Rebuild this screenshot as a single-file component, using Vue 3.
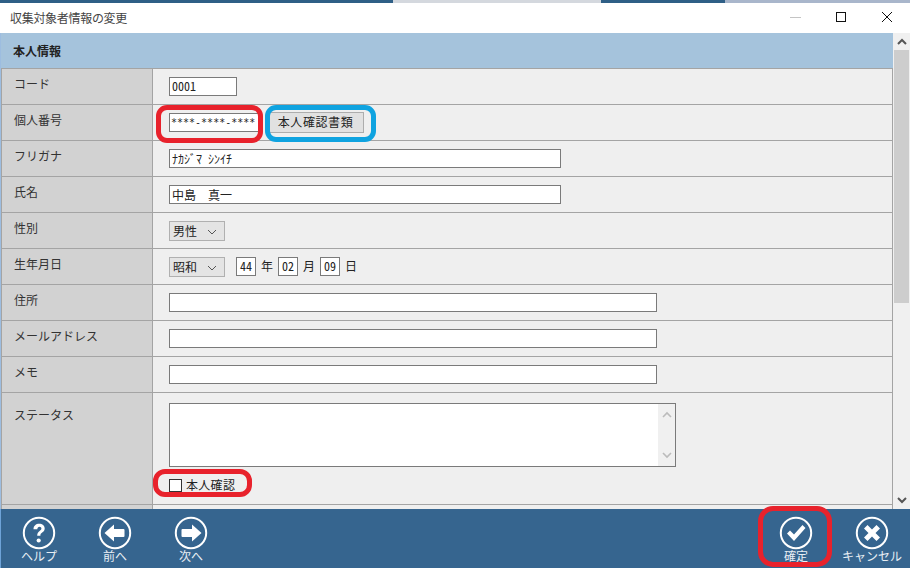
<script setup>
const textRows = [
  { label: '住所', w: 488 },
  { label: 'メールアドレス', w: 488 },
  { label: 'メモ', w: 488 },
]
</script>

<template>
  <div class="win">
    <div class="topstrip"><span class="s1"></span><span class="s2"></span><span class="s3"></span></div>
    <div class="titlebar">
      <span class="title">収集対象者情報の変更</span>
      <div class="ctrls">
        <svg width="46" height="30" viewBox="0 0 46 30"><path d="M18 14.500h11" stroke="#c4c4c4" stroke-width="1" /></svg>
        <svg width="46" height="30" viewBox="0 0 46 30"><rect x="18.500" y="9.500" width="9" height="9" fill="none" stroke="#111" /></svg>
        <svg width="46" height="30" viewBox="0 0 46 30"><path d="M18 9l10 10M28 9l-10 10" stroke="#111" fill="none" /></svg>
      </div>
    </div>
    <div class="body">
      <div class="main">
        <div class="sect">本人情報</div>
        <div class="table">
          <div class="row">
            <div class="lab">コード</div>
            <div class="val"><span class="tb w68 num">0001</span></div>
          </div>
          <div class="row">
            <div class="lab">個人番号</div>
            <div class="val gap">
              <span class="tb w91 stars">****-****-****</span>
              <button class="btn">本人確認書類</button>
              <span class="mark red m1"></span>
              <span class="mark blue m2"></span>
            </div>
          </div>
          <div class="row">
            <div class="lab">フリガナ</div>
            <div class="val"><span class="tb w392">ﾅｶｼﾞﾏ ｼﾝｲﾁ</span></div>
          </div>
          <div class="row">
            <div class="lab">氏名</div>
            <div class="val"><span class="tb w392 full">中島　真一</span></div>
          </div>
          <div class="row">
            <div class="lab">性別</div>
            <div class="val"><span class="sel">男性<svg class="chev" width="10" height="6" viewBox="0 0 10 6"><path d="M1 1l4 4 4-4" fill="none" stroke="#555" /></svg></span></div>
          </div>
          <div class="row">
            <div class="lab">生年月日</div>
            <div class="val">
              <span class="sel">昭和<svg class="chev" width="10" height="6" viewBox="0 0 10 6"><path d="M1 1l4 4 4-4" fill="none" stroke="#555" /></svg></span>
              <span class="tb w20 num first">44</span><span class="u">年</span>
              <span class="tb w20 num">02</span><span class="u">月</span>
              <span class="tb w20 num">09</span><span class="u">日</span>
            </div>
          </div>
          <div v-for="r in textRows" :key="r.label" class="row">
            <div class="lab">{{ r.label }}</div>
            <div class="val"><span class="tb" :style="{ width: r.w + 'px' }"></span></div>
          </div>
          <div class="row tall">
            <div class="lab">ステータス</div>
            <div class="val col">
              <div class="area">
                <div class="areabar">
                  <svg width="10" height="7" viewBox="0 0 10 7"><path d="M1 6l4-4 4 4" fill="none" stroke="#bbb" stroke-width="1.600" /></svg>
                  <svg width="10" height="7" viewBox="0 0 10 7"><path d="M1 1l4 4 4-4" fill="none" stroke="#bbb" stroke-width="1.600" /></svg>
                </div>
              </div>
              <div class="check"><span class="box"></span>本人確認</div>
              <span class="mark red m3"></span>
            </div>
          </div>
          <div class="row stub"><div class="lab"></div><div class="val"></div></div>
        </div>
      </div>
      <div class="sb">
        <div class="sbbtn"><svg width="10" height="7" viewBox="0 0 10 7"><path d="M1 6l4-4 4 4" fill="none" stroke="#555" stroke-width="2" /></svg></div>
        <div class="thumb"></div>
        <div class="sbrest"></div>
        <div class="sbbtn"><svg width="10" height="7" viewBox="0 0 10 7"><path d="M1 1l4 4 4-4" fill="none" stroke="#555" stroke-width="2" /></svg></div>
      </div>
    </div>
    <div class="foot">
      <div class="fbtn">
        <svg width="34" height="34" viewBox="0 0 34 34"><circle cx="17" cy="17" r="15.200" fill="none" stroke="#fff" stroke-width="2" /><path d="M11.500 13.200c0-3.400 2.500-5.400 5.700-5.400 3.200 0 5.500 1.800 5.500 4.700 0 2-1.100 3.100-2.500 4.100-1.300.9-1.800 1.500-1.800 3.200h-3.200c0-2.500.7-3.600 2.400-4.800 1.200-.9 1.800-1.400 1.800-2.400 0-1.100-.8-1.800-1.900-1.800-1.300 0-2.100.9-2.200 2.400z" fill="#fff" /><circle cx="16.700" cy="24.500" r="2.100" fill="#fff" /></svg>
        <span>ヘルプ</span>
      </div>
      <div class="fbtn">
        <svg width="34" height="34" viewBox="0 0 34 34"><circle cx="17" cy="17" r="15.200" fill="none" stroke="#fff" stroke-width="2" /><path d="M6.500 17L16 8.500V13h9.500a1 1 0 0 1 1 1v6a1 1 0 0 1-1 1H16v4.500z" fill="#fff" /></svg>
        <span>前へ</span>
      </div>
      <div class="fbtn">
        <svg width="34" height="34" viewBox="0 0 34 34"><circle cx="17" cy="17" r="15.200" fill="none" stroke="#fff" stroke-width="2" /><path d="M27.500 17L18 8.500V13H8.500a1 1 0 0 0-1 1v6a1 1 0 0 0 1 1H18v4.500z" fill="#fff" /></svg>
        <span>次へ</span>
      </div>
      <div class="spacer"></div>
      <div class="fbtn">
        <svg width="34" height="34" viewBox="0 0 34 34"><circle cx="17" cy="17" r="15.200" fill="none" stroke="#fff" stroke-width="2" /><path d="M8 17.500l3-3 4 4 8.500-9.500 3 3L15 25z" fill="#fff" /></svg>
        <span>確定</span>
        <span class="mark red m4"></span>
      </div>
      <div class="fbtn">
        <svg width="34" height="34" viewBox="0 0 34 34"><circle cx="17" cy="17" r="15.200" fill="none" stroke="#fff" stroke-width="2" /><path d="M9 12.500L12.500 9l4.500 4.500L21.500 9l3.500 3.500-4.500 4.500 4.500 4.500-3.500 3.500-4.500-4.500-4.500 4.500L9 21.500l4.500-4.500z" fill="#fff" /></svg>
        <span>キャンセル</span>
      </div>
    </div>
  </div>
</template>

<style scoped>
.win {
  width: 910px;
  height: 568px;
  display: flex;
  flex-direction: column;
  overflow: hidden;
  font-family: "Noto Sans CJK JP", "Liberation Sans", sans-serif;
  font-size: 12px;
  color: #222;
  background: #fff;
}
.topstrip {
  height: 3px;
  flex: none;
  display: flex;
  background: #a9b6cb;
}
.s1 { width: 393px; background: #2f5f86; }
.s2 { width: 208px; background: #d4d8de; }
.s3 { width: 124px; background: #2f5f86; }
.titlebar {
  height: 30px;
  flex: none;
  display: flex;
  align-items: center;
  justify-content: space-between;
  background: #fff;
  padding-left: 10px;
}
.title {
  font-size: 12px;
  letter-spacing: -.3px;
  color: #444;
  margin-top: -2px;
}
.ctrls { display: flex; }
.ctrls svg { display: block; }
.body {
  height: 476px;
  flex: none;
  display: flex;
  border-left: 1px solid #9dbde0;
}
.main {
  width: 892px;
  flex: none;
  overflow: hidden;
  background: #efefef;
}
.sect {
  height: 35px;
  background: #a5c3dc;
  display: flex;
  align-items: center;
  padding-left: 12px;
  font-weight: 700;
  font-size: 12px;
  color: #222;
}
.table { border-left: 1px solid #a4a4a4; border-right: 1px solid #a4a4a4; }
.row {
  height: 36px;
  box-sizing: border-box;
  display: flex;
  border-top: 1px solid #a4a4a4;
}
.row.tall { height: 112px; }
.row.tall .lab { padding-top: 13px; }
.row.stub { height: 10px; }
.lab {
  width: 151px;
  flex: none;
  box-sizing: border-box;
  background: #d2d2d2;
  border-right: 1px solid #a4a4a4;
  padding: 6px 0 0 12px;
  line-height: 18px;
  font-size: 12px;
  color: #333;
}
.val {
  position: relative;
  flex: 1;
  display: flex;
  align-items: flex-start;
  padding: 8px 0 0 16px;
}
.tb {
  display: block;
  box-sizing: border-box;
  height: 19px;
  flex: none;
  background: #fff;
  border: 1px solid #7a7a7a;
  padding-left: 2px;
  font-family: "Noto Sans CJK JP", sans-serif;
  font-feature-settings: "hwid";
  font-size: 12px;
  line-height: 17px;
  color: #222;
  overflow: hidden;
  white-space: nowrap;
}
.num { line-height: 15px; }
.full { font-feature-settings: normal; }
.stars {
  font-family: "DejaVu Sans Mono", monospace;
  font-feature-settings: normal;
  font-size: 10px;
  line-height: 17px;
  padding-left: 1px;
}
.w68 { width: 68px; }
.w91 { width: 91px; }
.w392 { width: 392px; }
.w20 { width: 20px; padding: 0; text-align: center; }
.gap { gap: 6px; padding-top: 7px; }
.gap .tb { margin-top: 1px; }
.btn {
  width: 97px;
  height: 21px;
  box-sizing: border-box;
  background: #e1e1e1;
  border: 1px solid #adadad;
  margin: 0 0 0 1px;
  padding: 0 0 2px;
  font-family: "Noto Sans CJK JP", sans-serif;
  font-size: 12px;
  letter-spacing: .6px;
  color: #222;
}
.sel {
  position: relative;
  display: block;
  box-sizing: border-box;
  width: 56px;
  height: 20px;
  flex: none;
  background: #e4e4e4;
  border: 1px solid #b0b0b0;
  padding-left: 3px;
  line-height: 18px;
  font-size: 12px;
  color: #222;
}
.chev { position: absolute; right: 7px; top: 7px; }
.first { margin-left: 11px; }
.u { width: 22px; flex: none; text-align: center; line-height: 18px; font-size: 12px; color: #222; }
.col { flex-direction: column; padding-top: 10px; }
.area {
  position: relative;
  box-sizing: border-box;
  width: 507px;
  height: 64px;
  background: #fff;
  border: 1px solid #7a7a7a;
}
.areabar {
  position: absolute;
  right: 0;
  top: 0;
  bottom: 0;
  width: 17px;
  background: #f0f0f0;
  display: flex;
  flex-direction: column;
  align-items: center;
  justify-content: space-between;
  padding: 7px 0;
  box-sizing: border-box;
}
.check {
  margin-top: 9px;
  display: flex;
  align-items: center;
  gap: 4px;
  font-size: 12px;
  letter-spacing: .3px;
  line-height: 18px;
  color: #222;
}
.box {
  width: 13px;
  height: 13px;
  box-sizing: border-box;
  background: #fff;
  border: 1px solid #333;
}
.sb {
  width: 17px;
  flex: none;
  display: flex;
  flex-direction: column;
  background: #f0f0f0;
}
.sbbtn {
  height: 17px;
  flex: none;
  display: flex;
  align-items: center;
  justify-content: center;
}
.thumb { height: 253px; flex: none; margin: 0 1px; background: #cdcdcd; }
.sbrest { flex: 1; }
.foot {
  height: 59px;
  flex: none;
  box-sizing: border-box;
  display: flex;
  background: #36658f;
  border-left: 1px solid #6ea3d8;
  padding-top: 7px;
}
.spacer { flex: 1; }
.fbtn {
  position: relative;
  width: 76px;
  display: flex;
  flex-direction: column;
  align-items: center;
  color: #e8eef4;
  font-size: 12px;
  line-height: 16px;
}
.fbtn span:not(.mark) { margin-top: -2px; }
.mark {
  position: absolute;
  box-sizing: border-box;
  border-radius: 11px;
  pointer-events: none;
}
.red { border: 5px solid #e8222c; }
.blue { border: 5px solid #0fa3e0; }
.m1 { left: 3px; top: 0; width: 107px; height: 38px; }
.m2 { left: 112px; top: 0; width: 111px; height: 37px; }
.m3 { left: 0; top: 76px; width: 99px; height: 28px; border-radius: 12px; }
.m4 { left: 0; top: -10px; width: 74px; height: 61px; border-radius: 15px; }
</style>
